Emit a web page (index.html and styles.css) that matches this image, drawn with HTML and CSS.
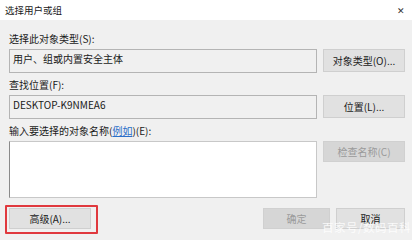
FILE: index.html
```html
<!DOCTYPE html>
<html>
  <head>
    <title>选择用户或组</title>
    <link rel="stylesheet" href="styles.css">
  </head>
  <body>
    <div class="dialog">
      <div class="titlebar">
        <span class="title">选择用户或组</span>
        <span class="close">✕</span>
      </div>
      <div class="content">
        <div class="label label-first">选择此对象类型(S):</div>
        <div class="row">
          <div class="field">用户、组或内置安全主体</div>
          <button class="btn">对象类型(O)...</button>
        </div>
        <div class="label">查找位置(F):</div>
        <div class="row">
          <div class="field">DESKTOP-K9NMEA6</div>
          <button class="btn">位置(L)...</button>
        </div>
        <div class="label">输入要选择的对象名称(<a class="link">例如</a>)(E):</div>
        <div class="row">
          <div class="input"></div>
          <button class="btn btn-disabled">检查名称(C)</button>
        </div>
        <div class="footer">
          <div class="highlight">
            <button class="btn btn-advanced">高级(A)...</button>
          </div>
          <div class="actions">
            <button class="btn btn-disabled btn-ok">确定</button>
            <button class="btn btn-cancel">取消</button>
          </div>
        </div>
      </div>
      <div class="watermark">百家号/数码百科</div>
    </div>
  </body>
</html>
```

FILE: styles.css
```css
body {
  margin: 0;
  font-family: "Noto Sans CJK SC", "Liberation Sans", sans-serif;
  font-size: 10px;
  color: #1a1a1a;
  background-color: #f0f0f0;
}

.dialog {
  position: relative;
  width: 412px;
  height: 240px;
  overflow: hidden;
  background-color: #f0f0f0;
}

.titlebar {
  height: 20px;
  background-color: #ffffff;
  display: flex;
  justify-content: space-between;
  align-items: center;
  padding: 0 7px 0 5px;
}

.title {
  font-size: 9.5px;
}

.close {
  font-size: 9px;
  color: #333;
}

.content {
  padding: 0 7px 0 9px;
}

.label {
  height: 12px;
  line-height: 12px;
  margin: 6px 0 4px;
}

.label-first {
  margin-top: 13px;
}

.link {
  color: #2a6fc9;
  text-decoration: underline;
}

.row {
  display: grid;
  grid-template-columns: 308px 82px;
  gap: 6px;
  align-items: start;
}

.field {
  height: 24px;
  box-sizing: border-box;
  border: 1px solid #b4b4b4;
  background-color: #f0f0f0;
  padding: 2px 3px;
  line-height: 14px;
}

.input {
  height: 57px;
  box-sizing: border-box;
  border: 1px solid #c8c8c8;
  border-left-color: #8a8a8a;
  background-color: #ffffff;
}

.btn {
  height: 23px;
  box-sizing: border-box;
  border: 1px solid #cfcfcf;
  background-color: #e1e1e1;
  font-family: inherit;
  font-size: 10px;
  color: #1a1a1a;
  padding: 0;
}

.btn-disabled {
  height: 21px;
  background-color: #d6d6d6;
  border-color: #d0d0d0;
  color: #9a9a9a;
}

.footer {
  display: flex;
  justify-content: space-between;
  align-items: flex-start;
  margin-top: 10px;
}

.highlight {
  margin: -3px 0 0 -4px;
  padding: 1px 5px 3px 2px;
  border: 2px solid #e0393e;
  border-radius: 1px;
}

.btn-advanced {
  display: block;
  width: 82px;
  height: 21px;
}

.actions {
  display: flex;
  gap: 6px;
}

.btn-ok {
  width: 67px;
}

.btn-cancel {
  width: 69px;
  height: 21px;
}

.watermark {
  position: absolute;
  left: 322px;
  top: 219px;
  font-size: 11.5px;
  color: rgba(255, 255, 255, 0.85);
  letter-spacing: 0.5px;
}
```
